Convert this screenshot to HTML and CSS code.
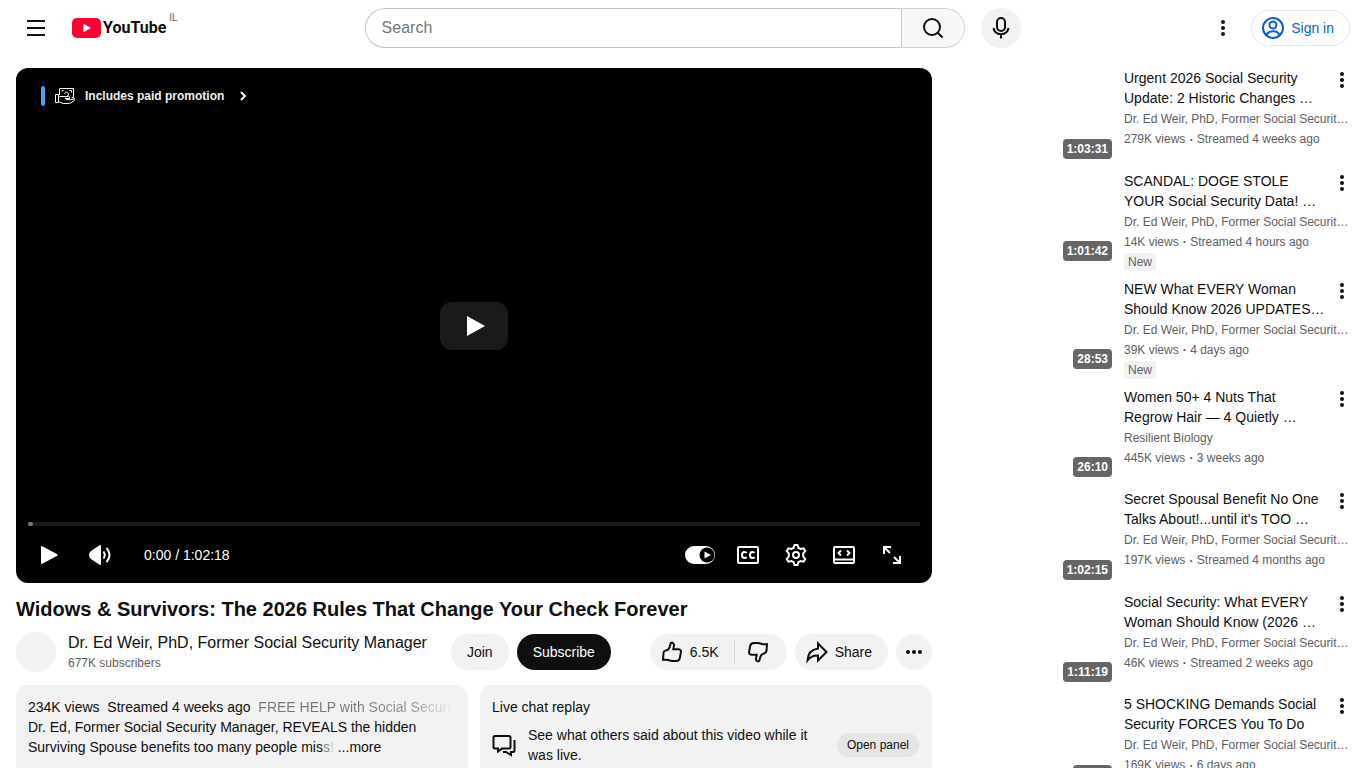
FILE: index.html
```html
<!DOCTYPE html>
<html lang="en">
<head>
    <meta charset="UTF-8">
    <meta name="viewport" content="width=device-width, initial-scale=1.0">
    <title>Widows &amp; Survivors: The 2026 Rules That Change Your Check Forever - YouTube</title>
    <link rel="stylesheet" href="styles.css">
</head>
<body>

    <!-- shared icons -->
    <svg class="sprite" aria-hidden="true">
        <symbol id="dots" viewBox="0 0 24 24">
            <circle cx="12" cy="6" r="2"/><circle cx="12" cy="12" r="2"/><circle cx="12" cy="18" r="2"/>
        </symbol>
        <symbol id="thumb" viewBox="0 0 24 24">
            <path d="M3 19.8 3.5 13Q3.8 11 5.8 10.6 9 9.8 9.8 6.8L10.5 3.7Q11 2.2 12.6 2.8 14.3 3.6 14 5.4L13.3 9.2 18.6 9.3Q21.3 9.6 20.9 12L19.9 17.8Q19.3 20.9 16.2 21L12 20.9Q9.500 20.5 8 20Q5.500 19.400 3 19.800Z"/>
        </symbol>
    </svg>

    <header class="masthead">
        <div class="start">
            <button class="icon-button" aria-label="Guide">
                <svg class="icon line" viewBox="0 0 24 24"><path d="M3 5H21M3 12H21M3 19H21"/></svg>
            </button>
            <a class="logo" href="#">
                <svg class="logo-mark" viewBox="0 0 29 20"><rect width="29" height="20" rx="5" fill="#ff0033"/><path d="M11.500 5.800 19 10 11.500 14.200Z" fill="#fff"/></svg>
                <span class="logo-text">YouTube</span>
                <span class="country">IL</span>
            </a>
        </div>
        <div class="center">
            <form class="search">
                <input type="text" class="search-input" placeholder="Search" aria-label="Search">
                <button type="button" class="search-button" aria-label="Search">
                    <svg class="icon line" viewBox="0 0 24 24"><circle cx="11" cy="11" r="8"/><path d="M16.500 16.500 21.500 21.500"/></svg>
                </button>
            </form>
            <button class="mic" aria-label="Search with your voice">
                <svg class="icon line" viewBox="0 0 24 24"><rect x="8" y="2" width="8" height="13" rx="4"/><path d="M4.500 12Q5.500 18 12 18.200 18.500 18 19.500 12M12 18V22.500"/></svg>
            </button>
        </div>
        <div class="end">
            <button class="icon-button" aria-label="Settings"><svg class="icon"><use href="#dots"/></svg></button>
            <a class="sign-in" href="#">
                <svg class="icon line" viewBox="0 0 24 24"><circle cx="12" cy="12" r="10"/><circle cx="12" cy="9" r="3.500"/><path d="M5.500 19Q7 15.300 12 15.300T18.500 19"/></svg>
                Sign in
            </a>
        </div>
    </header>

    <div class="page">
        <main class="primary">
            <div class="player">
                <a class="promo" href="#">
                    <span class="promo-bar"></span>
                    <svg class="promo-icon" viewBox="0 0 20 18"><path d="M.500 7.500H3.500V15.500H.500ZM3.500 14.500Q8 17.500 13 16.500 19.500 15.500 19.500 11.500 16 13.500 12 12.500L10 11.500H14.500Q15.500 9.500 13.500 9.500H6Q4.500 9.500 3.500 10.500M4.500 8V1.500H18.500V10.500H16.500M7 4.500V3.500H8.500M14.500 3.500H16.500V5.500M9.500 7Q10 5.300 11.500 5.300T13.500 7 12 9"/></svg>
                    <span>Includes paid promotion</span>
                    <svg class="chevron" viewBox="0 0 8 10"><path d="M2 1 6 5 2 9"/></svg>
                </a>
                <button class="big-play" aria-label="Play">
                    <svg viewBox="0 0 68 48"><path d="M27 14 45 24 27 34Z" fill="#fff"/></svg>
                </button>
                <div class="player-bottom">
                    <div class="progress"><div class="progress-loaded"></div></div>
                    <div class="controls">
                        <button aria-label="Play"><svg class="icon" viewBox="0 0 24 24"><path d="M5 4Q5 2.500 6.300 3.200L21.200 11.300Q22 12 21.200 12.700L6.300 20.800Q5 21.500 5 20Z"/></svg></button>
                        <button aria-label="Mute"><svg class="icon" viewBox="0 0 24 24"><path d="M11.500 2.300Q13 1.500 13 3V21Q13 22.500 11.500 21.700L3 16Q1 14.500 1 12T3 8Z"/><path class="wave" d="M15.500 8.500Q18 12 15.500 15.500M18.500 5Q24.500 12 18.500 19"/></svg></button>
                        <span class="time">0:00 / 1:02:18</span>
                        <div class="controls-right">
                            <button aria-label="Autoplay"><svg class="autoplay" viewBox="0 0 30 18"><rect width="30" height="18" rx="9"/><circle cx="22" cy="9" r="7.500" fill="#000"/><path d="M19.500 5.500 26 9 19.500 12.500Z"/></svg></button>
                            <button aria-label="Subtitles"><svg class="icon line" viewBox="0 0 24 24"><rect x="2" y="4" width="20" height="16" rx="1"/><path d="M10.500 10Q10 9 8.500 9 6 9 6 12T8.500 15Q10 15 10.500 14M18.500 10Q18 9 16.500 9 14 9 14 12T16.500 15Q18 15 18.500 14"/></svg></button>
                            <button aria-label="Settings"><svg class="icon line" viewBox="0 0 24 24"><circle cx="12" cy="12" r="3"/><path d="M10.500 2H13.500L14.500 5Q15.500 5.300 16.500 6L19.600 5.300 21.200 8 19.200 10.500V13.500L21.200 16 19.600 18.700 16.500 18Q15.500 18.700 14.500 19L13.500 22H10.500L9.500 19Q8.500 18.700 7.500 18L4.400 18.700 2.800 16 4.800 13.500V10.500L2.800 8 4.400 5.300 7.500 6Q8.500 5.300 9.500 5Z"/></svg></button>
                            <button aria-label="Theater mode"><svg class="icon line" viewBox="0 0 24 24"><rect x="2" y="4" width="20" height="16" rx="1"/><path d="M2 16.500H22M9 7.500 6.500 10 9 12.500M15 7.500 17.500 10 15 12.500"/></svg></button>
                            <button aria-label="Full screen"><svg class="icon line" viewBox="0 0 24 24"><path d="M4 11V4H11M4 4 10 10M20 13V20H13M20 20 14 14"/></svg></button>
                        </div>
                    </div>
                </div>
            </div>

            <h1>Widows &amp; Survivors: The 2026 Rules That Change Your Check Forever</h1>

            <div class="meta">
                <a class="avatar" href="#" aria-label="Channel"></a>
                <div class="owner">
                    <a class="owner-name" href="#">Dr. Ed Weir, PhD, Former Social Security Manager</a>
                    <span class="subscribers">677K subscribers</span>
                </div>
                <button class="pill">Join</button>
                <button class="pill subscribe">Subscribe</button>
                <div class="actions">
                    <div class="rating">
                        <button class="pill like"><svg class="icon line"><use href="#thumb"/></svg>6.5K</button>
                        <button class="pill dislike" aria-label="Dislike"><svg class="icon line flipped"><use href="#thumb"/></svg></button>
                    </div>
                    <button class="pill share"><svg class="icon line" viewBox="0 0 24 24"><path d="M13 3.500 21.500 12 13 20.500V15.500Q6.500 15.200 2.500 20.500 3 10 13 8.500Z"/></svg>Share</button>
                    <button class="pill more" aria-label="More actions"><svg class="icon sideways"><use href="#dots"/></svg></button>
                </div>
            </div>

            <div class="cards">
                <section class="card description">
                    <p class="first-line">234K views&nbsp; Streamed 4 weeks ago&nbsp; <a href="#">FREE HELP with Social Securit</a></p>
                    <p>Dr. Ed, Former Social Security Manager, REVEALS the hidden Surviving Spouse benefits too many people mis<span class="fade-one">s</span><span class="fade-two">!</span> <a href="#">...more</a></p>
                </section>
                <section class="card">
                    <h2>Live chat replay</h2>
                    <div class="chat">
                        <svg class="icon line" viewBox="0 0 24 24"><path d="M3 3H17Q18.500 3 18.500 4.500V14Q18.500 15.500 17 15.500H10L6 18.500V15.500H3Q1.500 15.500 1.500 14V4.500Q1.500 3 3 3ZM22.500 7V17.500Q22.500 19 21 19H19V22L14 19H11"/></svg>
                        <p>See what others said about this video while it was live.</p>
                        <button class="open-panel">Open panel</button>
                    </div>
                </section>
            </div>
        </main>

        <aside class="related">
            <article class="video">
                <a class="thumbnail" href="#"><span class="duration">1:03:31</span></a>
                <div class="details">
                    <h3>Urgent 2026 Social Security Update: 2 Historic Changes …</h3>
                    <p>Dr. Ed Weir, PhD, Former Social Security Manager</p>
                    <p>279K views <b>•</b> Streamed 4 weeks ago</p>
                    <button class="menu" aria-label="More"><svg class="icon"><use href="#dots"/></svg></button>
                </div>
            </article>
            <article class="video">
                <a class="thumbnail" href="#"><span class="duration">1:01:42</span></a>
                <div class="details">
                    <h3>SCANDAL: DOGE STOLE YOUR Social Security Data! …</h3>
                    <p>Dr. Ed Weir, PhD, Former Social Security Manager</p>
                    <p>14K views <b>•</b> Streamed 4 hours ago</p>
                    <span class="new">New</span>
                    <button class="menu" aria-label="More"><svg class="icon"><use href="#dots"/></svg></button>
                </div>
            </article>
            <article class="video">
                <a class="thumbnail" href="#"><span class="duration">28:53</span></a>
                <div class="details">
                    <h3>NEW What EVERY Woman Should Know 2026 UPDATES…</h3>
                    <p>Dr. Ed Weir, PhD, Former Social Security Manager</p>
                    <p>39K views <b>•</b> 4 days ago</p>
                    <span class="new">New</span>
                    <button class="menu" aria-label="More"><svg class="icon"><use href="#dots"/></svg></button>
                </div>
            </article>
            <article class="video">
                <a class="thumbnail" href="#"><span class="duration">26:10</span></a>
                <div class="details">
                    <h3>Women 50+ 4 Nuts That Regrow Hair — 4 Quietly …</h3>
                    <p>Resilient Biology</p>
                    <p>445K views <b>•</b> 3 weeks ago</p>
                    <button class="menu" aria-label="More"><svg class="icon"><use href="#dots"/></svg></button>
                </div>
            </article>
            <article class="video">
                <a class="thumbnail" href="#"><span class="duration">1:02:15</span></a>
                <div class="details">
                    <h3>Secret Spousal Benefit No One Talks About!...until it's TOO …</h3>
                    <p>Dr. Ed Weir, PhD, Former Social Security Manager</p>
                    <p>197K views <b>•</b> Streamed 4 months ago</p>
                    <button class="menu" aria-label="More"><svg class="icon"><use href="#dots"/></svg></button>
                </div>
            </article>
            <article class="video">
                <a class="thumbnail" href="#"><span class="duration">1:11:19</span></a>
                <div class="details">
                    <h3>Social Security: What EVERY Woman Should Know (2026 …</h3>
                    <p>Dr. Ed Weir, PhD, Former Social Security Manager</p>
                    <p>46K views <b>•</b> Streamed 2 weeks ago</p>
                    <button class="menu" aria-label="More"><svg class="icon"><use href="#dots"/></svg></button>
                </div>
            </article>
            <article class="video">
                <a class="thumbnail" href="#"><span class="duration">20:00</span></a>
                <div class="details">
                    <h3>5 SHOCKING Demands Social Security FORCES You To Do</h3>
                    <p>Dr. Ed Weir, PhD, Former Social Security Manager</p>
                    <p>169K views <b>•</b> 6 days ago</p>
                    <button class="menu" aria-label="More"><svg class="icon"><use href="#dots"/></svg></button>
                </div>
            </article>
        </aside>
    </div>

</body>
</html>
```
FILE: styles.css
```css
* {
    box-sizing: border-box;
}

body {
    margin: 0;
    height: 100vh;
    overflow: hidden;
    background-color: #fff;
    color: #0f0f0f;
    font-family: "Liberation Sans", Arial, sans-serif;
    font-size: 14px;
    line-height: 20px;
}

h1, h2, h3, p {
    margin: 0;
    font-weight: normal;
}

a {
    color: inherit;
    text-decoration: none;
}

button {
    display: flex;
    align-items: center;
    justify-content: center;
    padding: 0;
    border: none;
    background: none;
    color: inherit;
    font: inherit;
    cursor: pointer;
}

.sprite {
    display: none;
}

.icon {
    flex: none;
    width: 24px;
    height: 24px;
    fill: currentColor;
}

.line {
    fill: none;
    stroke: currentColor;
    stroke-width: 2;
}

.flipped {
    transform: rotate(180deg);
}

.sideways {
    transform: rotate(90deg);
}

/* Masthead */
.masthead {
    display: flex;
    align-items: center;
    justify-content: space-between;
    height: 56px;
    padding: 0 16px;
}

.start {
    display: flex;
    align-items: center;
    gap: 16px;
    width: 166px;
}

.icon-button {
    flex: none;
    width: 40px;
    height: 40px;
}

.logo {
    display: flex;
    align-items: center;
    gap: 2px;
}

.logo-mark {
    flex: none;
    width: 29px;
    height: 20px;
}

.logo-text {
    font-family: Roboto, "Liberation Sans", sans-serif;
    font-size: 16px;
    font-weight: bold;
}

.country {
    align-self: flex-start;
    margin: -10px 0 0 1px;
    color: #606060;
    font-size: 10px;
}

.center {
    display: flex;
    flex: 0 1 656px;
    gap: 16px;
}

.search {
    display: flex;
    flex: 1;
    height: 40px;
}

.search-input {
    flex: 1;
    min-width: 0;
    padding: 0 16px;
    border: 1px solid #c6c6c6;
    border-right: none;
    border-radius: 20px 0 0 20px;
    font: inherit;
    font-size: 16px;
}

.search-input::placeholder {
    color: #757575;
}

.search-button {
    width: 64px;
    border: 1px solid #d3d3d3;
    border-left-color: #c6c6c6;
    border-radius: 0 20px 20px 0;
    background-color: #f8f8f8;
}

.mic {
    width: 40px;
    height: 40px;
    border-radius: 50%;
    background-color: #f2f2f2;
}

.end {
    display: flex;
    align-items: center;
    gap: 8px;
}

.sign-in {
    display: flex;
    align-items: center;
    gap: 6px;
    height: 36px;
    padding: 0 15px 0 9px;
    border: 1px solid #e5e5e5;
    border-radius: 18px;
    color: #065fd4;
}

/* Page */
.page {
    display: flex;
    gap: 16px;
    padding: 12px 16px 0;
}

.primary {
    flex: 1;
    min-width: 0;
}

.player {
    position: relative;
    display: flex;
    flex-direction: column;
    justify-content: space-between;
    aspect-ratio: 16 / 9;
    border-radius: 12px;
    background-color: #000;
    color: #fff;
}

.promo {
    display: flex;
    align-items: center;
    align-self: flex-start;
    gap: 10px;
    padding: 18px 25px;
    color: #eee;
    font-weight: bold;
    font-size: 12px;
}

.promo-bar {
    width: 4px;
    height: 20px;
    border-radius: 2px;
    background-color: #4ca3e8;
}

.promo-icon {
    width: 20px;
    height: 18px;
    fill: none;
    stroke: #fff;
}

.chevron {
    width: 8px;
    height: 10px;
    margin-left: 5px;
    fill: none;
    stroke: #fff;
    stroke-width: 2;
}

.big-play {
    position: absolute;
    top: 50%;
    left: 50%;
    width: 68px;
    height: 48px;
    transform: translate(-50%, -50%);
    border-radius: 12px;
    background-color: #1a1a1a;
}

.progress {
    height: 4px;
    margin: 0 12px;
    background-color: #1a1a1a;
}

.progress-loaded {
    width: 5px;
    height: 4px;
    border-radius: 2px;
    background-color: #777;
}

.controls {
    display: flex;
    align-items: center;
    gap: 4px;
    height: 57px;
    padding: 0 16px 0 8px;
}

.controls button {
    width: 48px;
    height: 48px;
}

.wave {
    fill: none;
    stroke: currentColor;
    stroke-width: 2;
}

.time {
    margin-left: 16px;
}

.controls-right {
    display: flex;
    margin-left: auto;
}

.autoplay {
    width: 30px;
    height: 18px;
    fill: #fff;
}

h1 {
    margin-top: 12px;
    font-size: 20px;
    font-weight: bold;
    line-height: 28px;
}

.meta {
    display: flex;
    align-items: center;
    gap: 8px;
    margin-top: 9px;
}

.avatar {
    flex: none;
    width: 40px;
    height: 40px;
    margin-right: 4px;
    border-radius: 50%;
    background-color: #f2f2f2;
}

.owner {
    display: flex;
    flex-direction: column;
    margin-right: 16px;
    white-space: nowrap;
}

.owner-name {
    font-size: 16px;
    line-height: 22px;
}

.subscribers {
    color: #606060;
    font-size: 12px;
    line-height: 18px;
}

.pill {
    height: 36px;
    padding: 0 16px;
    border-radius: 18px;
    background-color: #f2f2f2;
}

.subscribe {
    background-color: #0f0f0f;
    color: #fff;
}

.actions {
    display: flex;
    gap: 8px;
    margin-left: auto;
}

.rating {
    display: flex;
}

.like {
    position: relative;
    gap: 6px;
    padding: 0 16px 0 10px;
    border-radius: 18px 0 0 18px;
}

.like::after {
    content: "";
    position: absolute;
    top: 6px;
    right: 0;
    width: 1px;
    height: 24px;
    background-color: #d9d9d9;
}

.dislike {
    width: 52px;
    padding: 0 5px 0 0;
    border-radius: 0 18px 18px 0;
}

.share {
    gap: 6px;
    padding: 0 16px 0 10px;
}

.more {
    width: 36px;
    padding: 0;
}

.cards {
    display: grid;
    grid-template-columns: 1fr 1fr;
    gap: 12px;
    margin-top: 13px;
}

.card {
    min-width: 0;
    padding: 12px;
    border-radius: 12px;
    background-color: #f2f2f2;
}

.card h2 {
    font-size: 14px;
    line-height: 20px;
}

.first-line {
    overflow: hidden;
    white-space: nowrap;
}

.first-line a {
    background: linear-gradient(90deg, #777 50%, #999 80%, #f2f2f2);
    background-clip: text;
    color: transparent;
}

.fade-one {
    color: #888;
}

.fade-two {
    color: #ccc;
}

.chat {
    display: flex;
    align-items: center;
    gap: 12px;
    margin-top: 8px;
}

.chat p {
    flex: 1;
    padding-right: 8px;
}

.open-panel {
    height: 24px;
    margin-right: 1px;
    padding: 0 10px;
    border-radius: 12px;
    background-color: #e5e5e5;
    font-size: 12px;
}

/* Related videos */
.related {
    display: flex;
    flex: 0 0 402px;
    flex-direction: column;
    gap: 8px;
    min-width: 0;
}

.video {
    display: flex;
    align-items: flex-start;
    gap: 8px;
}

.thumbnail {
    display: flex;
    flex: none;
    align-items: flex-end;
    justify-content: flex-end;
    width: 168px;
    aspect-ratio: 16 / 9;
    padding: 4px;
}

.duration {
    padding: 0 4px;
    border-radius: 4px;
    background-color: #666;
    color: #fff;
    font-size: 12px;
    font-weight: bold;
}

.details {
    position: relative;
    flex: 1;
    min-width: 0;
    color: #606060;
    font-size: 12px;
}

.details h3 {
    margin-bottom: 1px;
    padding-right: 24px;
    color: #0f0f0f;
    font-size: 14px;
}

.details p {
    overflow: hidden;
    text-overflow: ellipsis;
    white-space: nowrap;
}

.details b {
    margin: 0 1px;
    font-size: 8px;
    font-weight: normal;
    line-height: 8px;
    vertical-align: middle;
}

.new {
    display: block;
    width: fit-content;
    margin-top: 1px;
    padding: 0 4px;
    border-radius: 2px;
    background-color: #f2f2f2;
    line-height: 18px;
}

.menu {
    position: absolute;
    top: 0;
    right: -4px;
    color: #0f0f0f;
}
```
